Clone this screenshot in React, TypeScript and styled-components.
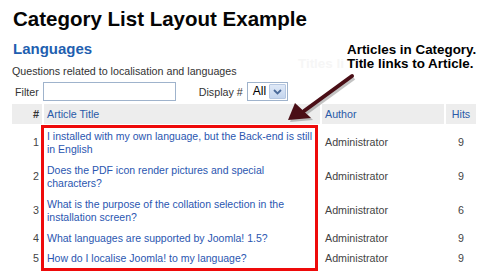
import React from "react";
import styled, { createGlobalStyle } from "styled-components";

const Global = createGlobalStyle`
  html, body { margin: 0; padding: 0; background: #ffffff; }
  body { font-family: "Liberation Sans", Arial, sans-serif; width: 500px; height: 276px; overflow: hidden; }
`;

const Page = styled.div`
  position: relative;
  width: 500px;
  height: 276px;
  padding-left: 12px;
  box-sizing: border-box;
`;

const Title = styled.h1`
  margin: 0;
  padding: 7px 0 0 1px;
  font-size: 20.5px;
  line-height: 24px;
  font-weight: bold;
  color: #050505;
`;

const CategoryHeading = styled.h2`
  margin: 9px 0 0 1px;
  font-size: 15px;
  line-height: 18px;
  font-weight: bold;
  color: #1f5fb0;
`;

const Description = styled.p`
  margin: 7px 0 0 0;
  font-size: 10.7px;
  line-height: 13px;
  color: #333333;
`;

const FilterBar = styled.div`
  display: flex;
  align-items: center;
  margin-top: 4px;
  height: 19px;
  font-size: 10.7px;
  color: #333333;
`;

const Label = styled.span<{ $ml?: number }>`
  margin-left: ${(p) => p.$ml ?? 0}px;
  margin-right: 4px;
`;

const TextInput = styled.input`
  box-sizing: border-box;
  width: 133px;
  height: 19px;
  border: 1px solid #9fb3cc;
  padding: 0 2px;
  font: inherit;
`;

const SelectBox = styled.div`
  box-sizing: border-box;
  width: 41px;
  height: 19px;
  border: 1px solid #9fb3cc;
  display: flex;
  align-items: stretch;
  justify-content: space-between;
  font-size: 12px;
  color: #000;
  background: #fff;
`;

const SelectValue = styled.span`
  padding: 1px 0 0 5px;
`;

const SelectButton = styled.span`
  width: 15px;
  margin: 1px;
  background: linear-gradient(#dfe9f7, #c4d5ee);
  border: 1px solid #b6c8e2;
  display: flex;
  align-items: center;
  justify-content: center;
  border-radius: 1px;
`;

const TableWrap = styled.div`
  position: relative;
  margin-top: 3px;
  width: 464px;
`;

const Grid = styled.div`
  display: grid;
  grid-template-columns: 30px 276px 122px 30px;
  column-gap: 2px;
  font-size: 10.7px;
`;

const HeadCell = styled.div<{ $align?: string }>`
  background: #ededed;
  height: 20px;
  line-height: 20px;
  padding: 0 3px;
  color: #2a5aa8;
  text-align: ${(p) => p.$align ?? "left"};
`;

const HashHead = styled(HeadCell)`
  color: #333;
  font-weight: bold;
  font-size: 11px;
`;

const Cell = styled.div<{ $align?: string; $first?: boolean }>`
  display: flex;
  align-items: center;
  justify-content: ${(p) => p.$align ?? "flex-start"};
  padding: 3.5px 3px;
  margin-top: ${(p) => (p.$first ? 2 : 0)}px;
  line-height: 13.5px;
  color: #444;
`;

const LinkCell = styled(Cell)`
  color: #2a56b0;
  font-size: 10.5px;
  padding-right: 2px;
`;

const RedBox = styled.div`
  position: absolute;
  left: 29px;
  top: 21px;
  width: 277px;
  height: 146px;
  border: 3px solid #ee0a0a;
  box-sizing: border-box;
  pointer-events: none;
`;

const Callout = styled.div`
  position: absolute;
  left: 347px;
  top: 43px;
  font-size: 13.4px;
  line-height: 14px;
  font-weight: bold;
  color: #000;
`;

const Ghost = styled.div`
  position: absolute;
  left: 298px;
  top: 43px;
  font-size: 13.4px;
  line-height: 14px;
  font-weight: bold;
  color: #f6f6f6;
`;

const ArrowSvg = styled.svg`
  position: absolute;
  left: 280px;
  top: 70px;
  overflow: visible;
`;

const rows = [
  { n: 1, t: "I installed with my own language, but the Back-end is still in English", h: 9 },
  { n: 2, t: "Does the PDF icon render pictures and special characters?", h: 9 },
  { n: 3, t: "What is the purpose of the collation selection in the installation screen?", h: 6 },
  { n: 4, t: "What languages are supported by Joomla! 1.5?", h: 9 },
  { n: 5, t: "How do I localise Joomla! to my language?", h: 9 },
];

export default function App() {
  return (
    <Page>
      <Global />
      <Title>Category List Layout Example</Title>
      <CategoryHeading>Languages</CategoryHeading>
      <Description>Questions related to localisation and languages</Description>
      <FilterBar>
        <Label $ml={3}>Filter</Label>
        <TextInput />
        <Label $ml={23}>Display #</Label>
        <SelectBox>
          <SelectValue>All</SelectValue>
          <SelectButton>
            <svg width="9" height="6" viewBox="0 0 9 6">
              <path d="M1 1 L4.5 4.5 L8 1" fill="none" stroke="#4a6a9a" strokeWidth="1.8" />
            </svg>
          </SelectButton>
        </SelectBox>
      </FilterBar>
      <TableWrap>
        <Grid>
          <HashHead $align="right">#</HashHead>
          <HeadCell>Article Title</HeadCell>
          <HeadCell>Author</HeadCell>
          <HeadCell $align="center">Hits</HeadCell>
          {rows.map((r, i) => (
            <React.Fragment key={r.n}>
              <Cell $align="flex-end" $first={i === 0}>{r.n}</Cell>
              <LinkCell $first={i === 0}>{r.t}</LinkCell>
              <Cell $first={i === 0}>Administrator</Cell>
              <Cell $align="center" $first={i === 0}>{r.h}</Cell>
            </React.Fragment>
          ))}
        </Grid>
        <RedBox />
      </TableWrap>
      <Ghost>
        <div>&nbsp;</div>
        <div>Titles li</div>
      </Ghost>
      <Callout>
        <div>Articles in Category.</div>
        <div>Title links to Article.</div>
      </Callout>
      <ArrowSvg width="90" height="60" viewBox="0 0 90 60">
        <g transform="translate(2,2)" opacity="0.35">
          <line x1="72" y1="6" x2="24" y2="41" stroke="#555" strokeWidth="4" />
          <polygon points="8,50 15,33 31,48" fill="#555" />
        </g>
        <line x1="72" y1="6" x2="24" y2="41" stroke="#4a0e16" strokeWidth="4" strokeLinecap="round" />
        <polygon points="8,50 15,33 31,48" fill="#4a0e16" />
      </ArrowSvg>
    </Page>
  );
}
